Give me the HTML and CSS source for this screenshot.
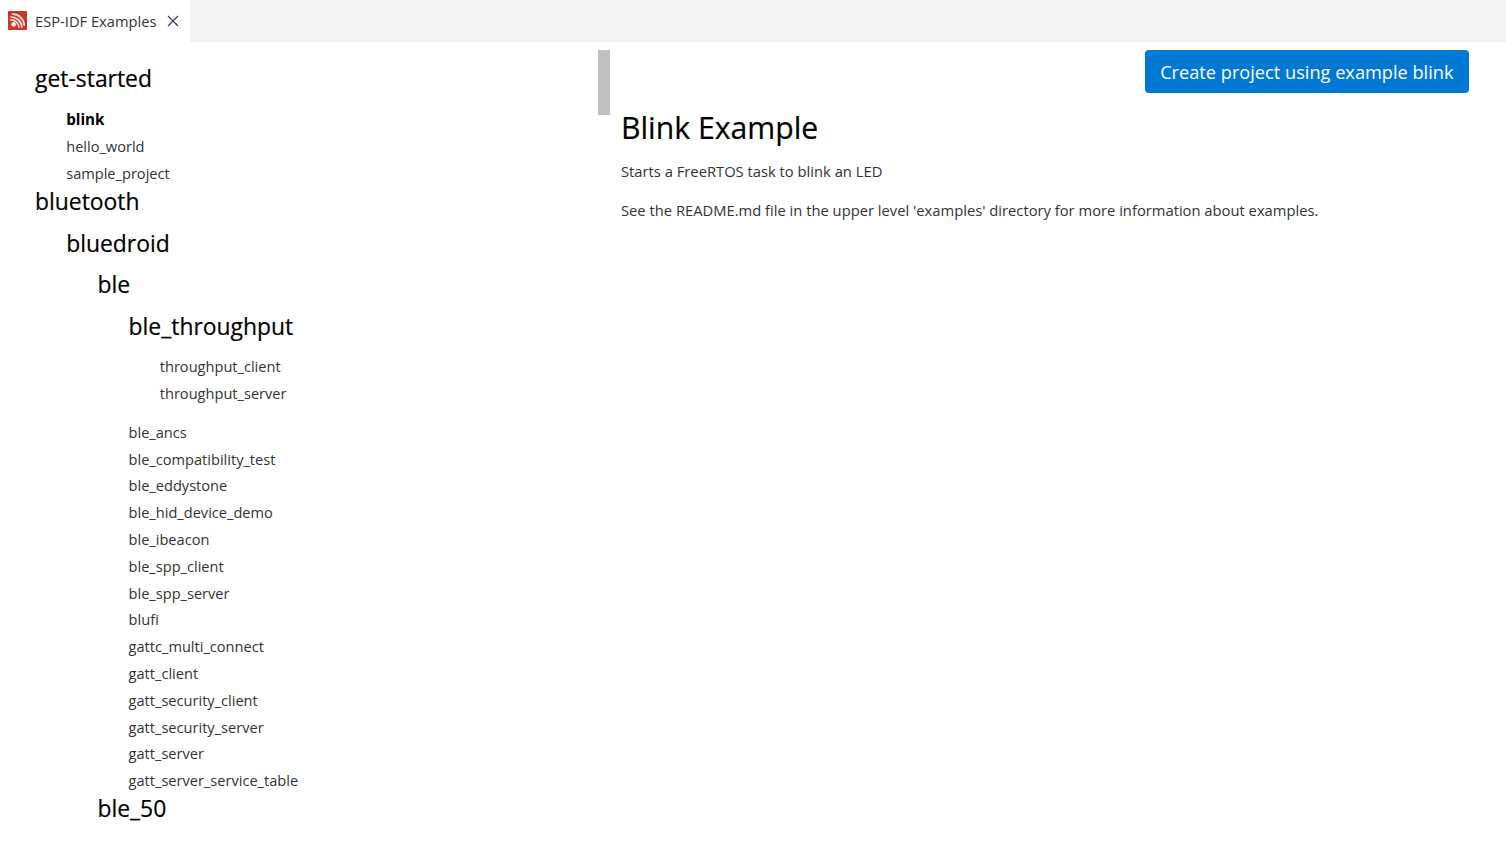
FILE: index.html
```html
<!DOCTYPE html>
<html lang="en">
<head>
  <meta charset="UTF-8">
  <title>ESP-IDF Examples</title>
  <link rel="stylesheet" href="styles.css">
</head>
<body>
  <div class="tabbar">
    <div class="tab">
      <svg class="tab-icon" width="19" height="19" viewBox="0 0 19 19">
        <rect width="19" height="19" rx="1" fill="#c8372a"/>
        <g fill="none" stroke="#f8e0dc" stroke-linecap="round">
          <path d="M4.5 3.2C10.5 3 16 8 16.2 14" stroke-width="1.7"/>
          <path d="M3 6C8.5 5.8 13.4 10.2 13.8 16" stroke-width="1.7"/>
          <path d="M2.6 9C6.8 8.6 10.6 12 11 16.4" stroke-width="1.7"/>
        </g>
        <circle cx="5.6" cy="13.4" r="2.4" fill="#f8e0dc"/>
      </svg>
      <span class="tab-title">ESP-IDF Examples</span>
      <svg class="tab-close" width="12" height="12" viewBox="0 0 12 12">
        <path d="M1 1L11 11M11 1L1 11" stroke="#33335c" stroke-width="1.1" fill="none"/>
      </svg>
    </div>
  </div>

  <div class="main">
    <div class="sidebar">
      <ul class="tree">
        <li>
          <h2 class="top">get-started</h2>
          <ul class="tree">
            <li class="leaf active">blink</li>
            <li class="leaf">hello_world</li>
            <li class="leaf">sample_project</li>
          </ul>
        </li>
        <li>
          <h2>bluetooth</h2>
          <ul class="tree">
            <li>
              <h2>bluedroid</h2>
              <ul class="tree">
                <li>
                  <h2>ble</h2>
                  <ul class="tree">
                    <li>
                      <h2>ble_throughput</h2>
                      <ul class="tree group">
                        <li class="leaf">throughput_client</li>
                        <li class="leaf">throughput_server</li>
                      </ul>
                    </li>
                    <li class="leaf">ble_ancs</li>
                    <li class="leaf">ble_compatibility_test</li>
                    <li class="leaf">ble_eddystone</li>
                    <li class="leaf">ble_hid_device_demo</li>
                    <li class="leaf">ble_ibeacon</li>
                    <li class="leaf">ble_spp_client</li>
                    <li class="leaf">ble_spp_server</li>
                    <li class="leaf">blufi</li>
                    <li class="leaf">gattc_multi_connect</li>
                    <li class="leaf">gatt_client</li>
                    <li class="leaf">gatt_security_client</li>
                    <li class="leaf">gatt_security_server</li>
                    <li class="leaf">gatt_server</li>
                    <li class="leaf">gatt_server_service_table</li>
                  </ul>
                </li>
                <li>
                  <h2>ble_50</h2>
                </li>
              </ul>
            </li>
          </ul>
        </li>
      </ul>
    </div>
    <div class="scrollbar"><div class="thumb"></div></div>
    <div class="content">
      <div class="actions">
        <button class="create-btn">Create project using example blink</button>
      </div>
      <h1>Blink Example</h1>
      <p>Starts a FreeRTOS task to blink an LED</p>
      <p>See the README.md file in the upper level 'examples' directory for more information about examples.</p>
    </div>
  </div>
</body>
</html>
```

FILE: styles.css
```css
html, body {
  height: 100%;
}
body {
  margin: 0;
  overflow: hidden;
  background: #fff;
  color: #000;
  font-family: "Open Sans", "Noto Sans", sans-serif;
  display: flex;
  flex-direction: column;
}
.tabbar {
  height: 42px;
  flex-shrink: 0;
  background: #f3f3f3;
  display: flex;
}
.tab {
  width: 190px;
  box-sizing: border-box;
  background: #fff;
  display: flex;
  align-items: center;
  padding-left: 8px;
}
.tab-icon {
  margin-right: 8px;
  margin-top: -1px;
}
.tab-title {
  font-size: 14.7px;
  color: #333;
  width: 132px;
  white-space: nowrap;
}
.main {
  flex: 1;
  display: flex;
  min-height: 0;
}
.sidebar {
  width: 598px;
  padding-top: 22px;
  overflow: hidden;
}
.scrollbar {
  width: 12px;
  padding-top: 8px;
}
.thumb {
  height: 65px;
  background: #bfbfbf;
}
.tree {
  list-style: none;
  margin: 0;
  padding: 0 0 0 31.2px;
}
.sidebar > .tree {
  padding-left: 35px;
}
.tree.group {
  margin-top: -0.8px;
  margin-bottom: 12.5px;
}
.tree h2 {
  margin: 0 0 11.6px;
  font-size: 22.9px;
  font-weight: 400;
  line-height: 30px;
  -webkit-text-stroke: 0.2px #000;
}
.tree h2.top {
  margin-bottom: 12px;
}
.tree h2.top + .tree {
  margin-bottom: 0.8px;
}
.leaf {
  font-size: 14.6px;
  line-height: 26.8px;
  color: #333;
}
.leaf.active {
  font-size: 15.2px;
  font-weight: 700;
  color: #000;
}
.content {
  flex: 1;
  padding: 8px 37px 0 11px;
}
.actions {
  display: flex;
  justify-content: flex-end;
}
.create-btn {
  height: 43px;
  padding: 0 15.5px;
  border: none;
  border-radius: 4px;
  background: #0078d4;
  color: #fff;
  font-family: inherit;
  font-size: 18.2px;
}
h1 {
  font-size: 30.2px;
  font-weight: 400;
  margin: 14px 0 0;
  line-height: 41px;
  -webkit-text-stroke: 0.2px #000;
}
p {
  font-size: 14.75px;
  color: #333;
  margin: 0 0 19px;
  line-height: 20px;
}
h1 + p {
  margin-top: 13px;
}
```
